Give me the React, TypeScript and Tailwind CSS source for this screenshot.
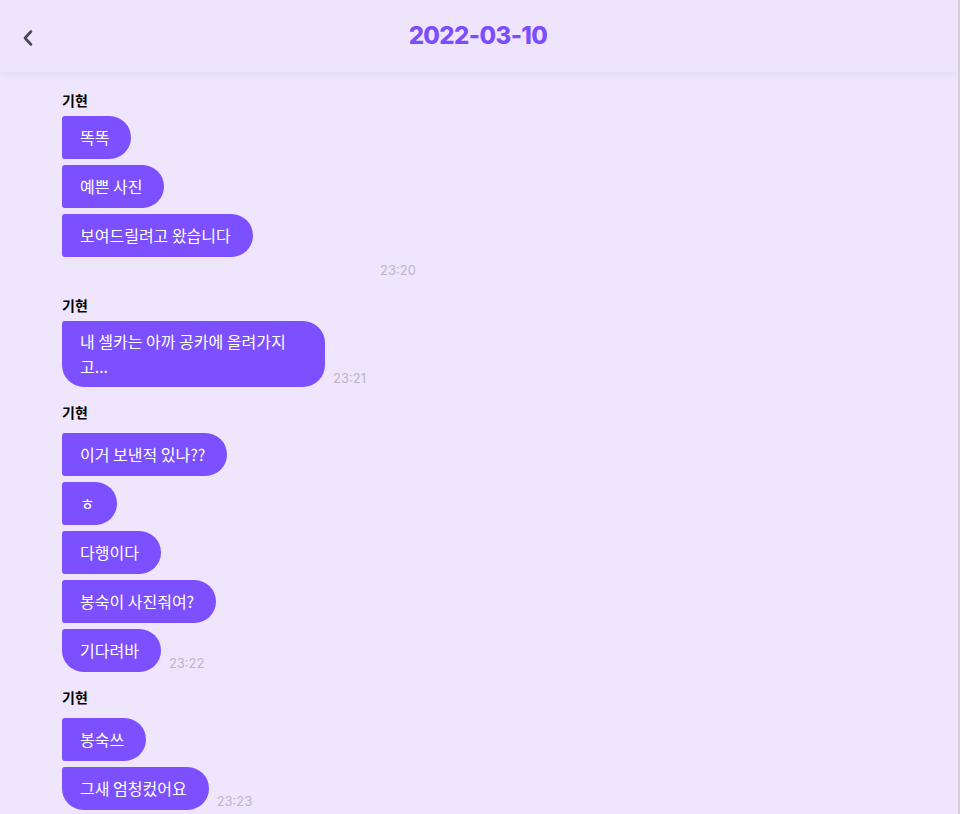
import React from "react";

const KR = { fontFamily: '"Noto Sans CJK KR", "Noto Sans", sans-serif' };
const TIME = { fontFamily: 'Inter, "Liberation Sans", sans-serif' };

function Bubble({
  children,
  rounded = false,
  className = "leading-[23px] py-[10px]",
}: {
  children: React.ReactNode;
  rounded?: boolean;
  className?: string;
}) {
  return (
    <div
      style={KR}
      className={`bg-[#7c4fff] text-white text-[16px] pl-[18px] pr-[22px] rounded-tl-[3px] rounded-tr-[22px] rounded-br-[22px] ${
        rounded ? "rounded-bl-[22px]" : "rounded-bl-[3px]"
      } ${className}`}
    >
      {children}
    </div>
  );
}

function Time({ t }: { t: string }) {
  return (
    <span style={TIME} className="block text-[13px] leading-4 text-[#bcb4c6] pb-[1px]">
      {t}
    </span>
  );
}

function Name({ className = "" }: { className?: string }) {
  return (
    <div style={KR} className={`text-[14px] leading-5 font-bold text-black ${className}`}>
      기현
    </div>
  );
}

function Row({ children }: { children: React.ReactNode }) {
  return <div className="flex items-end gap-2">{children}</div>;
}

export default function App() {
  return (
    <div className="w-[960px] h-[814px] overflow-hidden bg-[#efe6fe] border-r-2 border-[#d6d0dc] flex flex-col">
      <header className="h-[72px] shrink-0 flex items-center justify-center relative bg-[#eee5fd] shadow-[0_2px_6px_rgba(80,60,120,0.08)] z-10">
        <svg
          className="absolute left-[21px] top-[29px]"
          width="14"
          height="18"
          viewBox="0 0 14 18"
          fill="none"
        >
          <path d="M10 2.5 L4 9 L10 15.5" stroke="#4b4855" strokeWidth="2.6" strokeLinecap="round" strokeLinejoin="round" />
        </svg>
        <h1
          style={{ fontFamily: 'Inter, "Noto Sans", sans-serif' }}
          className="text-[24px] font-extrabold text-[#7b4dfb] tracking-[-0.6px] leading-none ml-[-2px]"
        >
          2022-03-10
        </h1>
      </header>

      <main className="pl-[62px] pt-[18px] flex flex-col items-start">
        {/* group 1 */}
        <Name />
        <div className="mt-[6px] flex flex-col items-start gap-[6px]">
          <Bubble>똑똑</Bubble>
          <Bubble>예쁜 사진</Bubble>
          <Bubble>보여드릴려고 왔습니다</Bubble>
        </div>
        <div className="mt-[5px] ml-[318px] flex leading-4">
          <Time t="23:20" />
        </div>

        {/* group 2 */}
        <Name className="mt-[16px]" />
        <div className="mt-[6px]">
          <Row>
            <Bubble rounded className="w-[263px] leading-[25px] py-[8px]">
              내 셀카는 아까 공카에 올려가지
              <br />
              고...
            </Bubble>
            <Time t="23:21" />
          </Row>
        </div>

        {/* group 3 */}
        <Name className="mt-[15px]" />
        <div className="mt-[11px] flex flex-col items-start gap-[6px]">
          <Bubble>이거 보낸적 있나??</Bubble>
          <Bubble>ㅎ</Bubble>
          <Bubble>다행이다</Bubble>
          <Bubble>봉숙이 사진줘여?</Bubble>
          <Row>
            <Bubble rounded>기다려바</Bubble>
            <Time t="23:22" />
          </Row>
        </div>

        {/* group 4 */}
        <Name className="mt-[15px]" />
        <div className="mt-[11px] flex flex-col items-start gap-[6px]">
          <Bubble>봉숙쓰</Bubble>
          <Row>
            <Bubble rounded>그새 엄청컸어요</Bubble>
            <Time t="23:23" />
          </Row>
        </div>
      </main>
    </div>
  );
}
